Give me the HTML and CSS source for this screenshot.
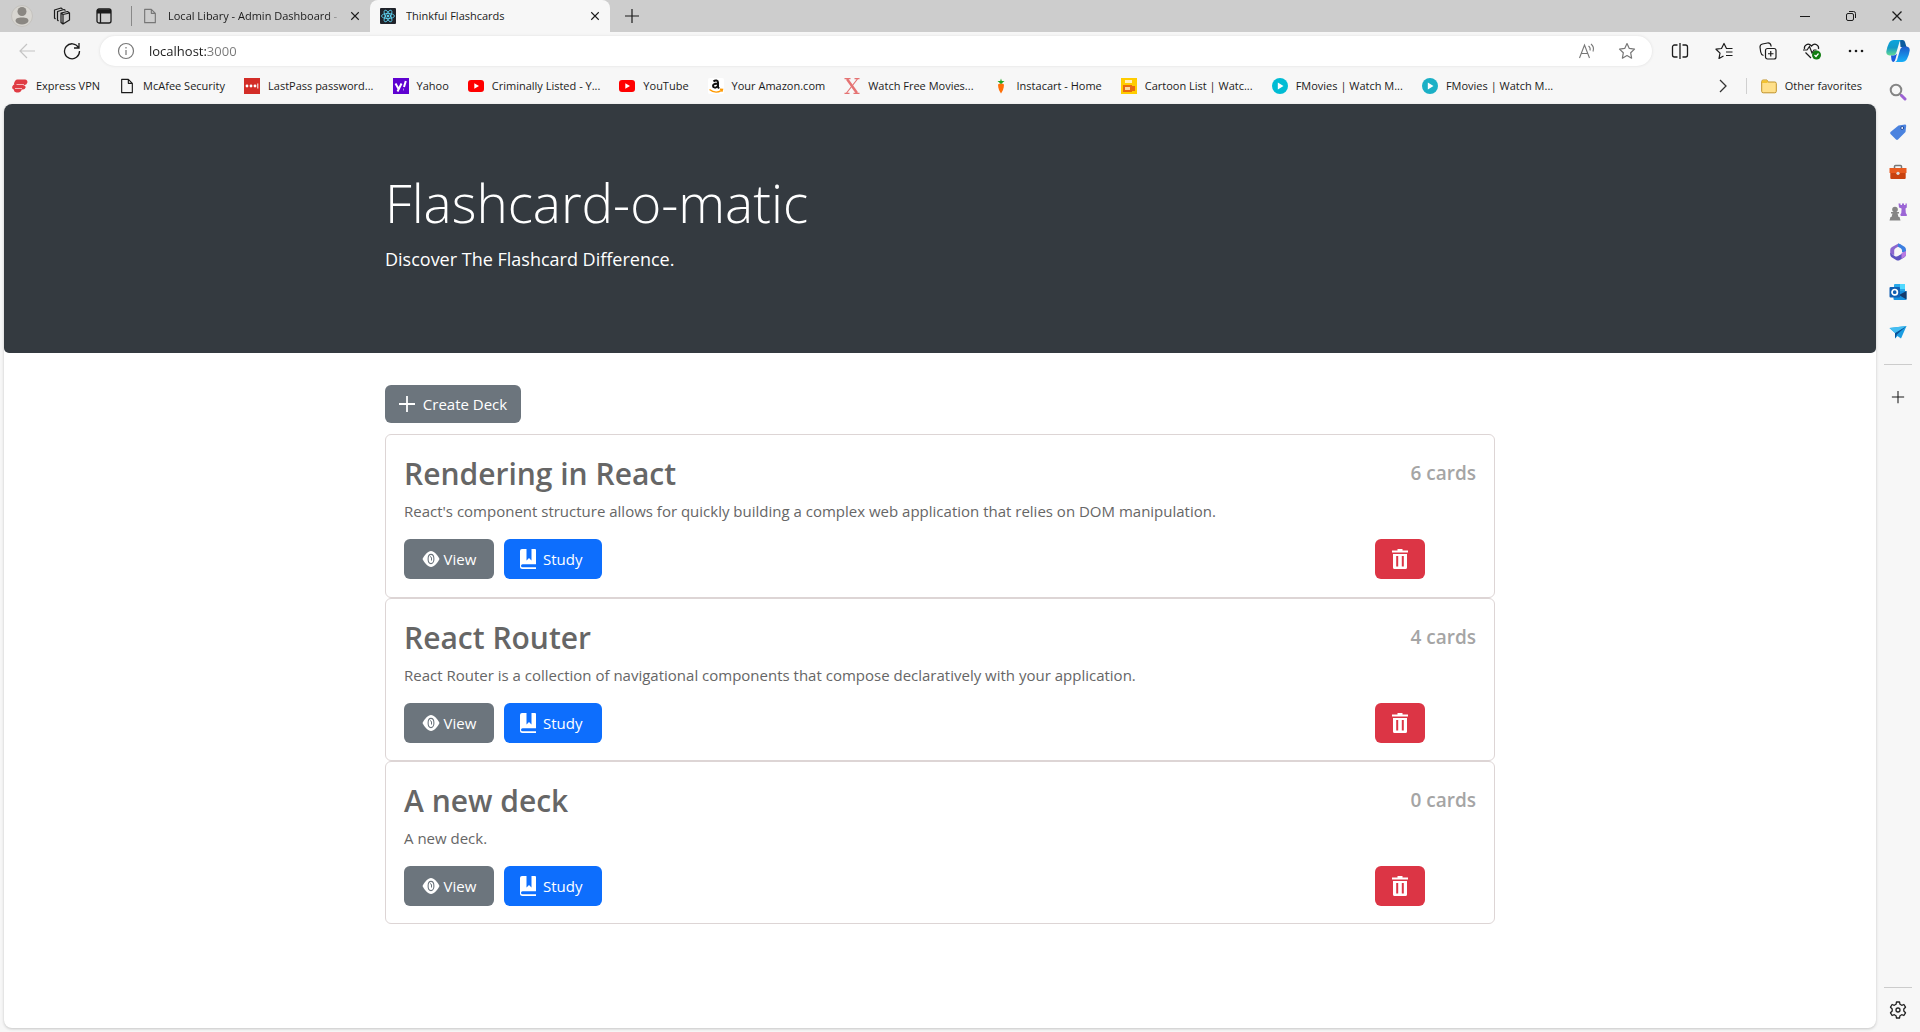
FILE: index.html
```html
<!DOCTYPE html>
<html lang="en">
<head>
<meta charset="utf-8">
<title>Thinkful Flashcards</title>
<meta name="viewport" content="width=device-width, initial-scale=1">
<link rel="stylesheet" href="styles.css">
</head>
<body>
<svg class="defs" aria-hidden="true">
  <symbol id="i-close" viewBox="0 0 12 12"><path d="M1.500 1.500l9 9M10.500 1.500l-9 9" fill="none" stroke="currentColor" stroke-width="1.300"/></symbol>
  <symbol id="i-file" viewBox="0 0 16 18"><path d="M2 1.500h7.500L14 6v10.500H2zM9.500 1.500V6H14" fill="none" stroke="currentColor" stroke-width="1.300" stroke-linejoin="round"/></symbol>
  <symbol id="i-plus" viewBox="0 0 16 16"><path d="M8 1v14M1 8h14" fill="none" stroke="currentColor" stroke-width="1.200"/></symbol>
  <symbol id="i-youtube" viewBox="0 0 16 16"><rect y="2" width="16" height="12" rx="3" fill="#f00"/><path d="M6.300 5.200L11 8l-4.700 2.800z" fill="#fff"/></symbol>
  <symbol id="i-play" viewBox="0 0 16 16"><circle cx="8" cy="8" r="8" fill="currentColor"/><path d="M5.800 4.500L11.500 8l-5.700 3.500z" fill="#fff"/></symbol>
  <symbol id="i-eye" viewBox="0 0 18 18"><path d="M.5 9C2.500 5 6 1 9 1s6.500 4 8.500 8c-2 4-5.500 8-8.500 8S2.500 13 .5 9z" fill="currentColor"/><ellipse cx="9" cy="9" rx="2.900" ry="4.600" fill="none" stroke="#6c757d" stroke-width="1.100"/><path d="M8 6.500l1.500 1v3" fill="none" stroke="#6c757d" stroke-width="1"/></symbol>
  <symbol id="i-book" viewBox="0 0 18 22"><path d="M3 1h4.500v11.500L10 10l2.500 2.500V1H16a1 1 0 0 1 1 1v14.200H3.500a1 1 0 0 0 0 3H17V21H3.500A2.500 2.500 0 0 1 1 18.500V3a2 2 0 0 1 2-2z" fill="currentColor"/></symbol>
  <symbol id="i-trash" viewBox="0 0 18 22"><path d="M1 2.500h5.500V1h5v1.500H17v2H1zM2 6h14v13.500a1.500 1.500 0 0 1-1.500 1.500h-11A1.500 1.500 0 0 1 2 19.500zM5.200 8v10.500h2V8zM10.800 8v10.500h2V8z" fill="currentColor" fill-rule="evenodd"/></symbol>
</svg>

<header class="tabstrip">
  <button class="icon-btn profile" aria-label="Profile"><svg viewBox="0 0 22 22"><circle cx="11" cy="11" r="10.500" fill="#d8d6d1" stroke="#c4c2be"/><circle cx="11" cy="6.500" r="4.500" fill="#8a8782"/><path d="M4.500 16c0-2.500 2-3.500 6.500-3.500s6.500 1 6.500 3.500c-1 4.500-12 4.500-13 0z" fill="#8a8782"/></svg></button>
  <button class="icon-btn workspaces" aria-label="Workspaces"><svg viewBox="0 0 18 18" fill="none" stroke="currentColor" stroke-width="1.200" stroke-linejoin="round"><path d="M8 6l6.500-1.500 2 1.500v7l-6.500 4-2-1.500zM8 6l2 1.500L16.500 6M10 7.500V17M5.500 14l-1-1V4.500L11 2.500l1.500 1M2.500 12l-1-1V3L8 1l1.500 1"/></svg></button>
  <button class="icon-btn actions" aria-label="Tab actions"><svg viewBox="0 0 16 16" fill="none" stroke="currentColor" stroke-width="1.300"><rect x="1" y="1" width="14" height="14" rx="2"/><path d="M1 3.500h14" stroke-width="4"/><path d="M4.500 5v10"/></svg></button>
  <span class="divider"></span>
  <div class="tab">
    <svg class="fav-icon muted"><use href="#i-file"/></svg>
    <span class="tab-title">Local Libary - Admin Dashboard -</span>
    <button class="tab-close" aria-label="Close tab"><svg><use href="#i-close"/></svg></button>
  </div>
  <div class="tab active">
    <svg class="fav-icon" viewBox="0 0 16 16" fill="none" stroke="#61dafb" stroke-width=".8"><rect width="16" height="16" rx="1" fill="#20232a" stroke="none"/><circle cx="8" cy="8" r="1" fill="#61dafb"/><ellipse cx="8" cy="8" rx="6.500" ry="2.500"/><ellipse cx="8" cy="8" rx="6.500" ry="2.500" transform="rotate(60 8 8)"/><ellipse cx="8" cy="8" rx="6.500" ry="2.500" transform="rotate(120 8 8)"/></svg>
    <span class="tab-title">Thinkful Flashcards</span>
    <button class="tab-close" aria-label="Close tab"><svg><use href="#i-close"/></svg></button>
  </div>
  <button class="icon-btn new-tab" aria-label="New tab"><svg><use href="#i-plus"/></svg></button>
  <div class="window-controls">
    <button aria-label="Minimize"><svg viewBox="0 0 12 12" fill="none" stroke="currentColor"><path d="M1 6.500h10"/></svg></button>
    <button aria-label="Restore"><svg viewBox="0 0 12 12" fill="none" stroke="currentColor"><rect x="1.500" y="3.500" width="7" height="7" rx="1.500"/><path d="M4 1.500h4.500a2 2 0 0 1 2 2V8"/></svg></button>
    <button aria-label="Close window"><svg><use href="#i-close"/></svg></button>
  </div>
</header>

<div class="window">
  <div class="main">
    <div class="toolbar">
      <button class="icon-btn back" aria-label="Back" disabled><svg viewBox="0 0 18 18" fill="none" stroke="currentColor" stroke-width="1.200"><path d="M17 9H2M9 2L2 9l7 7"/></svg></button>
      <button class="icon-btn reload" aria-label="Refresh"><svg viewBox="0 0 18 18" fill="none" stroke="currentColor" stroke-width="1.300"><path d="M15.500 5.500A7.500 7.500 0 1 0 16.500 9M16 1v5h-5"/></svg></button>
      <div class="address">
        <svg class="info" viewBox="0 0 18 18" fill="none" stroke="currentColor" stroke-width="1.200"><circle cx="9" cy="9" r="7.500"/><path d="M9 8v5M9 5v1.500"/></svg>
        <input type="text" aria-label="Address" value="localhost:3000">
        <button class="icon-btn" aria-label="Read aloud"><svg viewBox="0 0 18 18" fill="none" stroke="currentColor" stroke-width="1.100"><path d="M1.500 16L6.500 3l5 13M3.500 11.500h6M10.500 4c1.500 1 2 2.500 1.500 4.500M13 2c2.500 2 3 4.500 2 7.500"/></svg></button>
        <button class="icon-btn star" aria-label="Add to favorites"><svg viewBox="0 0 18 18" fill="none" stroke="currentColor" stroke-width="1.200" stroke-linejoin="round"><path d="M9 1.500l2.300 4.900 5.200.7-3.800 3.700.9 5.400L9 13.600l-4.600 2.600.9-5.400L1.500 7.100l5.200-.7z"/></svg></button>
      </div>
      <div class="tools">
        <button class="icon-btn" aria-label="Split screen"><svg viewBox="0 0 18 18" fill="none" stroke="currentColor" stroke-width="1.300"><path d="M9 1v16M6.500 3H3.500a2 2 0 0 0-2 2v8a2 2 0 0 0 2 2h3M11.500 3h3a2 2 0 0 1 2 2v8a2 2 0 0 1-2 2h-3"/></svg></button>
        <button class="icon-btn" aria-label="Favorites"><svg viewBox="0 0 18 18" fill="none" stroke="currentColor" stroke-width="1.200" stroke-linejoin="round"><path d="M17.500 6.500h-6L9 1.500 6.500 6.500l-5.500.7 4 3.900-1 5.400 4.500-2.500M11 10h6.500M11 13.500h6.500"/></svg></button>
        <button class="icon-btn" aria-label="Collections"><svg viewBox="0 0 18 18" fill="none" stroke="currentColor" stroke-width="1.200"><rect x="6.500" y="6.500" width="10.500" height="10.500" rx="2"/><path d="M11.750 9v5.500M9 11.750h5.500M4.500 13.500C2.500 13 2 12 1.700 10L1 5c0-2 .8-2.600 2.500-3l5-1c2-.2 3 .5 3.500 2.500l.3 1"/></svg></button>
        <button class="icon-btn" aria-label="Browser essentials"><svg viewBox="0 0 18 18" fill="none" stroke="currentColor" stroke-width="1.200"><path d="M1.500 7c-.8-3.500 3.500-7 7-3 3.500-4 7.800-.5 7 3M2.500 10.500L8 16M0 8h4l2.500-3.500L9 11l2-3h2.500"/><circle cx="13.500" cy="13" r="4.500" fill="#107c10" stroke="none"/><path d="M11.500 13l1.500 1.500 2.500-3" stroke="#fff"/></svg></button>
        <button class="icon-btn" aria-label="Settings and more"><svg viewBox="0 0 18 18" fill="currentColor"><circle cx="3" cy="9" r="1.300"/><circle cx="9" cy="9" r="1.300"/><circle cx="15" cy="9" r="1.300"/></svg></button>
      </div>
    </div>

    <nav class="favorites" aria-label="Favorites">
      <a href="#"><svg viewBox="0 0 16 16"><path d="M5.500 1.500H13a2.500 2.500 0 0 1 2.300 3.300Q14.500 7 12.500 7H11q3 .3 2.600 2.500Q13 11.500 11 11.500H9.800q-1 3-3.500 3H4.500q-3-.2-2.500-3H1.500Q-.3 10.500.3 8.500 1 6.500 3 6.500H1.800q1-5 3.700-5z" fill="#e03c44"/><path d="M4.500 6.500H12M3 10.500h7" stroke="#f9d5d7" stroke-width=".8"/></svg>Express VPN</a>
      <a href="#"><svg><use href="#i-file"/></svg>McAfee Security</a>
      <a href="#"><svg viewBox="0 0 16 16"><rect width="16" height="16" fill="#d32d27"/><g fill="#fff"><circle cx="3" cy="8" r="1.400"/><circle cx="7" cy="8" r="1.400"/><circle cx="11" cy="8" r="1.400"/><path d="M13.300 5.500h1v5h-1z"/></g></svg>LastPass password...</a>
      <a href="#"><svg viewBox="0 0 16 16"><rect width="16" height="16" fill="#5f01d1"/><path d="M2.500 5.500l2.800 5M8.500 5.500l-4 8M12.800 3L11 9M10.300 11.500h.5" fill="none" stroke="#fff" stroke-width="2"/></svg>Yahoo</a>
      <a href="#"><svg><use href="#i-youtube"/></svg>Criminally Listed - Y...</a>
      <a href="#"><svg><use href="#i-youtube"/></svg>YouTube</a>
      <a href="#"><svg viewBox="0 0 16 16"><rect width="16" height="16" rx="2" fill="#fff"/><path d="M5.500 3.500c2-2 4.500-1 4.500 1V9l1 1.500M9.700 5.500c-3 0-4.700.7-4.700 2.500s3 2.500 4.700 0" fill="none" stroke="#111" stroke-width="2"/><path d="M1.500 11.500c4 3.200 8.500 3.200 12 .8M12 11.300l2.500.2-.7 2.300" fill="none" stroke="#f90" stroke-width="1.400"/></svg>Your Amazon.com</a>
      <a href="#"><svg viewBox="0 0 16 16" fill="none" stroke="#e57373"><path d="M3 1l10 14" stroke-width="2.500"/><path d="M13.500 1l-11 14M.5.700h6M10.500.7h5M.5 15.300h5M9.500 15.300h6" stroke-width="1.200"/></svg>Watch Free Movies...</a>
      <a href="#"><svg viewBox="0 0 16 16"><path d="M5 6.500c1-1.500 5-1.500 6 0C11 11 9 14 8 15.500 7 14 5 11 5 6.500z" fill="#ff7009"/><path d="M8 6L4.500 3h2.700L8 .5 8.800 3h2.700z" fill="#1fa624"/></svg>Instacart - Home</a>
      <a href="#"><svg viewBox="0 0 16 16"><rect width="16" height="16" fill="#fc0"/><path d="M4 2h7v3H4z" fill="#fff0c0"/><path d="M2 7h9v7H2zM11 8h3v5h-3" fill="#e86a10"/><path d="M4 9h5v3H4z" fill="#fbd7a0"/></svg>Cartoon List | Watc...</a>
      <a href="#"><svg class="cyan"><use href="#i-play"/></svg>FMovies | Watch M...</a>
      <a href="#"><svg class="teal"><use href="#i-play"/></svg>FMovies | Watch M...</a>
      <button class="icon-btn overflow" aria-label="More favorites"><svg viewBox="0 0 16 16" fill="none" stroke="#333" stroke-width="1.300"><path d="M5 2l6 6-6 6"/></svg></button>
      <a class="other" href="#"><svg viewBox="0 0 16 16"><path d="M.7 3.500A1.500 1.500 0 0 1 2.200 2H6l1 2h6.800a1.500 1.500 0 0 1 1.500 1.500v7.800a1.500 1.500 0 0 1-1.500 1.500H2.200a1.500 1.500 0 0 1-1.500-1.500z" fill="#ffe08a" stroke="#c0932a"/><path d="M1 2.500h5.500V5H1z" fill="#f2c230"/></svg>Other favorites</a>
    </nav>

    <div class="page">
      <section class="hero">
        <div class="container">
          <h1>Flashcard-o-matic</h1>
          <p>Discover The Flashcard Difference.</p>
        </div>
      </section>
      <main class="container decks">
        <button class="btn secondary create"><svg class="plus" viewBox="0 0 16 16" fill="none" stroke="currentColor" stroke-width="1.800"><path d="M8 0v16M0 8h16"/></svg>Create Deck</button>
        <article class="deck">
          <div class="deck-head"><h2>Rendering in React</h2><span class="count">6 cards</span></div>
          <p>React's component structure allows for quickly building a complex web application that relies on DOM manipulation.</p>
          <div class="deck-actions">
            <button class="btn secondary view"><svg><use href="#i-eye"/></svg>View</button>
            <button class="btn primary study"><svg><use href="#i-book"/></svg>Study</button>
            <button class="btn danger" aria-label="Delete deck"><svg><use href="#i-trash"/></svg></button>
          </div>
        </article>
        <article class="deck">
          <div class="deck-head"><h2>React Router</h2><span class="count">4 cards</span></div>
          <p>React Router is a collection of navigational components that compose declaratively with your application.</p>
          <div class="deck-actions">
            <button class="btn secondary view"><svg><use href="#i-eye"/></svg>View</button>
            <button class="btn primary study"><svg><use href="#i-book"/></svg>Study</button>
            <button class="btn danger" aria-label="Delete deck"><svg><use href="#i-trash"/></svg></button>
          </div>
        </article>
        <article class="deck">
          <div class="deck-head"><h2>A new deck</h2><span class="count">0 cards</span></div>
          <p>A new deck.</p>
          <div class="deck-actions">
            <button class="btn secondary view"><svg><use href="#i-eye"/></svg>View</button>
            <button class="btn primary study"><svg><use href="#i-book"/></svg>Study</button>
            <button class="btn danger" aria-label="Delete deck"><svg><use href="#i-trash"/></svg></button>
          </div>
        </article>
      </main>
    </div>
  </div>

  <aside class="sidebar" aria-label="Sidebar">
    <button class="icon-btn copilot" aria-label="Copilot"><svg viewBox="0 0 24 24"><defs><linearGradient id="cg1" x1="0" y1="0" x2="0" y2="1"><stop offset="0" stop-color="#0aa5dd"/><stop offset=".5" stop-color="#1299c8"/><stop offset="1" stop-color="#64dc92"/></linearGradient><linearGradient id="cg2" x1="0" y1="0" x2="0" y2="1"><stop offset="0" stop-color="#1b59c9"/><stop offset="1" stop-color="#16b0f8"/></linearGradient></defs><path d="M14 1h2.500q2 0 2.500 2l1.500 5h-6z" fill="#0a5a9e"/><path d="M8 1h8c-2 0-2.500 1.500-3 3.500L10.500 13q-1 3.500-4 3.500H3.500Q0 16 .3 12.500q.5-4 2.700-8.500Q4.500 1 8 1z" fill="url(#cg1)"/><path d="M16 23H8.500c2 0 2.500-1.500 3-3.500L14 11q1-3.500 4-3.500h2.500q3.500.5 3.200 4-.5 4-2.700 8.500-1.500 3-5 3z" fill="url(#cg2)"/><path d="M5 16.500h2.500q1.700 0 3.500-2L9.500 20q-.8 3-2 3-1.500-.2-2-2z" fill="#1c5cdc"/></svg></button>
    <button class="icon-btn" aria-label="Search"><svg viewBox="0 0 18 18" fill="none"><circle cx="7" cy="7" r="5.300" stroke="#858585" stroke-width="2"/><path d="M11 11l2 2" stroke="#858585" stroke-width="2"/><path d="M12.500 12.500l3.500 3.500" stroke="#9d62d4" stroke-width="3" stroke-linecap="round"/></svg></button>
    <button class="icon-btn" aria-label="Shopping"><svg viewBox="0 0 18 18"><path d="M9.500 2.500L16 1.500q1.200 0 1.200 1.200L16.500 9 9 16.500q-1 .8-2 0L1.500 11q-.8-1 0-2z" fill="#4b83df"/><circle cx="13.200" cy="5" r="1.500" fill="#e5eeff" stroke="#234c9c"/></svg></button>
    <button class="icon-btn" aria-label="Tools"><svg viewBox="0 0 18 18"><path d="M5.500 5V3.500q0-1 1-1h5q1 0 1 1V5" fill="none" stroke="#777" stroke-width="1.500"/><path d="M.5 5h17v5H.5z" fill="#e85b20"/><path d="M1.300 10h15.400v5q0 1-1 1H2.300q-1 0-1-1z" fill="#c9420f"/><circle cx="9" cy="10.300" r="1.600" fill="#ddd"/></svg></button>
    <button class="icon-btn" aria-label="Games"><svg viewBox="0 0 18 18"><g fill="#858585"><circle cx="6" cy="6.500" r="2.800"/><path d="M2 9h8v1.500H8.500L9.500 14h1l1 3.500H.5l1-3.500h1l1-3.500H2z"/></g><path d="M9.500.5h2V2h1.500V.5h2V2h1.500V.5h1.300v4l-1.300 1 .3 4.500 1 1.500V13h-6l-.5-1.500 1-1.500.3-4.500-2.600-1z" fill="#9b65d5"/></svg></button>
    <button class="icon-btn" aria-label="Microsoft 365"><svg viewBox="0 0 18 18"><path d="M9.500.5L3 4Q1.200 5 1.200 7v4l4 1V7.500q0-1.500 1.300-2.200L12 2z" fill="#8b68cf"/><path d="M9 .5q1 0 2 .5l4.500 2.700Q17 4.700 17 7v4l-4-2V7.500q0-1.500-1.300-2.200L9 3.700z" fill="#3d7fe0"/><path d="M1.200 10l4.500 3Q7 14 8.500 13.200L17 8.500v2.700q0 2-1.600 3l-4.500 2.800q-2 1-3.800 0L2.600 14.300Q1.200 13.200 1.200 11z" fill="#5c53c0"/><path d="M17 8v3q0 2-1.500 3l-3 1.800V10z" fill="#b97ae2"/><path d="M9 5.500l3 1.700v3.600L9 12.500l-3-1.700V7.200z" fill="#f7f7f7"/></svg></button>
    <button class="icon-btn" aria-label="Outlook"><svg viewBox="0 0 18 18"><path d="M6 1h9q1 0 1 1v7H5V2q0-1 1-1z" fill="#28a8ea"/><path d="M11 1h5v5h-5z" fill="#50d9ff"/><path d="M4.500 8L17.500 8v8q0 1-1 1h-11q-1 0-1-1z" fill="#1490df"/><path d="M17.500 8v8.500L10 12z" fill="#123b6d"/><rect x=".5" y="4" width="10.500" height="10.500" rx="1" fill="#0f5fb3"/><circle cx="5.700" cy="9.200" r="2.700" fill="none" stroke="#fff" stroke-width="1.700"/></svg></button>
    <button class="icon-btn" aria-label="Drop"><svg viewBox="0 0 18 18"><path d="M.5 5L17.500 3 12 15.500 8.500 13 6 15.500V10z" fill="#1b9de2"/><path d="M17.500 3L6 10v5.500l2-4z" fill="#0b4f94"/><path d="M.5 5l17-2L6 10z" fill="#44bdf1"/></svg></button>
    <hr>
    <button class="icon-btn" aria-label="Customize"><svg class="thin"><use href="#i-plus"/></svg></button>
    <hr class="bottom">
    <button class="icon-btn gear" aria-label="Sidebar settings"><svg viewBox="0 0 18 18" fill="none" stroke="#222" stroke-width="1.300" stroke-linejoin="round"><path d="M7.500 1h3l.5 2.300 1.700 1 2.200-.8 1.600 2.700L14.800 8v2l1.700 1.800-1.600 2.700-2.200-.8-1.700 1-.5 2.300h-3L7 14.700l-1.700-1-2.200.8-1.600-2.700L3.200 10V8L1.500 6.200l1.600-2.700 2.200.8L7 3.300z"/><circle cx="9" cy="9" r="2"/></svg></button>
  </aside>
</div>
</body>
</html>
```

FILE: styles.css
```css
* { box-sizing: border-box; }

body {
  margin: 0;
  min-height: 100vh;
  display: flex;
  flex-direction: column;
  background: #f7f7f7;
  color: #1b1b1b;
  font: 11px/16px "Open Sans", "Noto Sans", sans-serif;
}

.defs { position: absolute; width: 0; height: 0; }
h1, h2, p { margin: 0; }
button { font: inherit; color: inherit; border: 0; padding: 0; background: none; }
svg { width: 16px; height: 16px; flex: none; display: block; }

.icon-btn { display: flex; align-items: center; justify-content: center; flex: none; }

/* Tab strip */
.tabstrip { display: flex; align-items: center; height: 32px; background: #cdcdcd; }
.profile { width: 44px; }
.profile svg { width: 22px; height: 22px; }
.workspaces { width: 36px; }
.workspaces svg { width: 18px; height: 18px; }
.actions { width: 48px; }
.divider { width: 1px; height: 20px; background: #888; margin-left: 3px; }
.tab { display: flex; align-items: center; gap: 10px; width: 238px; height: 32px; padding: 0 7px 0 10px; }
.tab.active { width: 240px; background: #f7f7f7; border-radius: 8px 8px 0 0; }
.tab-title { flex: 1; white-space: nowrap; overflow: hidden; }
.tab:not(.active) .tab-title { -webkit-mask-image: linear-gradient(to right, #000 160px, transparent 172px); mask-image: linear-gradient(to right, #000 160px, transparent 172px); }
.muted { color: #777; }
.tab-close { width: 16px; height: 16px; display: grid; place-items: center; }
.tab-close svg { width: 10px; height: 10px; }
.new-tab { width: 44px; }
.window-controls { display: flex; margin-left: auto; }
.window-controls button { width: 46px; height: 32px; display: grid; place-items: center; }
.window-controls svg { width: 12px; height: 12px; }

/* Window body */
.window { flex: 1; display: flex; }
.main { flex: 1; min-width: 0; display: flex; flex-direction: column; padding: 0 0 4px 4px; }

.toolbar { display: flex; align-items: center; height: 38px; }
.toolbar svg { width: 18px; height: 18px; }
.back { width: 46px; color: #c4c4c4; }
.reload { width: 44px; }
.address {
  flex: 1;
  display: flex;
  align-items: center;
  height: 30px;
  margin-left: 6px;
  padding: 0 16px 0 17px;
  border-radius: 16px;
  background: #fff;
  box-shadow: 0 0 3px #ddd;
  color: #777;
}
.address input {
  flex: 1;
  margin-left: 14px;
  padding: 0;
  border: 0;
  outline: 0;
  font: 13px/20px "Open Sans", "Noto Sans", sans-serif;
  color: transparent;
  background: linear-gradient(to right, #1b1b1b 57px, #777 57px) text;
}
.address .star { margin-left: 22px; }
.tools { display: flex; width: 224px; padding-left: 6px; }
.tools .icon-btn { width: 44px; }

.favorites { display: flex; align-items: center; gap: 19px; height: 34px; padding: 0 14px 2px 8px; }
.favorites a { display: flex; align-items: center; gap: 8px; color: inherit; text-decoration: none; white-space: nowrap; }
.cyan { color: #00bcd4; }
.teal { color: #1bb0c6; }
.favorites .overflow { margin-left: auto; margin-right: -4px; }
.favorites .other { border-left: 1px solid #d0d0d0; padding-left: 14px; }

.page {
  flex: 1;
  background: #fff;
  border-radius: 8px;
  box-shadow: 0 1px 3px #c4c4c4;
  color: #666;
  font-size: 15px;
  line-height: 24px;
}
.container { max-width: 1110px; margin: 0 auto; }

.hero { padding: 65px 0 79px; background: #343a40; border-radius: 8px 8px 5px 5px; color: #fff; }
.hero h1 { font-size: 53px; line-height: 67px; font-weight: 300; }
.hero p { margin-top: 8px; font-size: 18px; line-height: 30px; }

.decks { padding: 32px 0; }
.btn { display: flex; align-items: center; justify-content: center; height: 40px; border-radius: 6px; color: #fff; }
.secondary { background: #6c757d; }
.primary { background: #0d6efd; }
.danger { width: 50px; background: #dc3545; margin-left: auto; margin-right: 51px; }
.create { height: 38px; width: 136px; gap: 8px; }
.view { width: 90px; gap: 4px; }
.view svg { width: 18px; height: 18px; }
.study { width: 98px; gap: 6px; justify-content: flex-start; padding-left: 15px; }
.study svg, .danger svg { width: 18px; height: 22px; }
.create + .deck { margin-top: 11px; }

.deck { padding: 18px 18px 17px; border: 1px solid #ddd5d5; border-radius: 6px; }
.create + .deck { padding-bottom: 18px; }
.deck-head { display: flex; justify-content: space-between; }
.deck h2 { font-size: 30px; line-height: 42px; font-weight: 600; }
.count { font-size: 19px; line-height: 40px; font-weight: 600; color: #a5a5a5; }
.deck p { margin-top: 4px; }
.deck-actions { display: flex; gap: 10px; margin-top: 16px; }

/* Sidebar */
.sidebar { width: 44px; display: flex; flex-direction: column; align-items: center; }
.sidebar .icon-btn { width: 40px; height: 40px; }
.sidebar svg { width: 18px; height: 18px; }
.sidebar .copilot { height: 38px; margin-bottom: 2px; }
.sidebar .copilot svg { width: 24px; height: 24px; }
.sidebar .thin { width: 14px; height: 14px; }
.sidebar hr { width: 28px; margin: 12px 0; border: 0; border-top: 1px solid #ccc; }
.sidebar .bottom { margin-top: auto; margin-bottom: 2px; }
.sidebar .gear { margin-bottom: 2px; }
```
